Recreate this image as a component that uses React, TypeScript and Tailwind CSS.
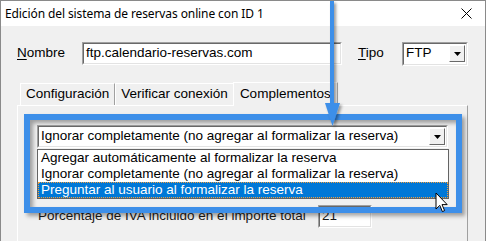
import { useState } from "react";

// Windows dialog: online booking system editor, "Complementos" tab with an open combobox.

const OPTIONS = [
  "Agregar automáticamente al formalizar la reserva",
  "Ignorar completamente (no agregar al formalizar la reserva)",
  "Preguntar al usuario al formalizar la reserva",
];

const TABS = ["Configuración", "Verificar conexión", "Complementos"];

const DropButton = () => (
  <div className="w-[16px] h-[17px] bg-[#f0f0f0] border border-t-white border-l-white border-r-[#696969] border-b-[#696969] flex items-center justify-center">
    <svg width="7" height="4" viewBox="0 0 7 4">
      <path d="M0 0H7L3.5 4Z" fill="#000" />
    </svg>
  </div>
);

const Sunken = ({ className, children }: { className: string; children: React.ReactNode }) => (
  <div
    className={`border border-t-[#a0a0a0] border-l-[#a0a0a0] border-r-white border-b-white ${className}`}
  >
    <div className="w-full h-full border border-t-[#696969] border-l-[#696969] border-r-[#e3e3e3] border-b-[#e3e3e3] bg-white flex items-center">
      {children}
    </div>
  </div>
);

export default function App() {
  const [active] = useState(2);
  const [selected] = useState(1);
  const [hover] = useState(2);

  return (
    <div
      className="relative w-[486px] h-[241px] overflow-hidden bg-[#f0f0f0] border-t border-l border-r border-[#8a8a8a] text-black"
      style={{ fontFamily: '"Liberation Sans", Arial, sans-serif' }}
    >
      {/* Title bar */}
      <div className="h-[25px] bg-white flex items-center justify-between pl-[4px] pr-[13px]">
        <span className="text-[12px] tracking-[-0.1px]" style={{ fontFamily: '"Noto Sans", sans-serif' }}>
          Edición del sistema de reservas online con ID 1
        </span>
        <svg width="11" height="11" viewBox="0 0 11 11">
          <path d="M0.5 0.5L10.5 10.5M10.5 0.5L0.5 10.5" stroke="#000" strokeWidth="1" />
        </svg>
      </div>

      {/* Nombre / Tipo */}
      <div className="flex items-center h-[23px] mt-[16px] text-[13.5px]">
        <span className="ml-[16px] w-[65px]">
          <span className="underline underline-offset-2">N</span>ombre
        </span>
        <Sunken className="w-[260px] h-[23px]">
          <span className="pl-[2px]">ftp.calendario-reservas.com</span>
        </Sunken>
        <span className="ml-[16px] w-[44px]">
          <span className="underline underline-offset-2">T</span>ipo
        </span>
        <Sunken className="w-[66px] h-[24px]">
          <span className="pl-[2px] flex-1">FTP</span>
          <div className="pr-[1px]">
            <DropButton />
          </div>
        </Sunken>
      </div>

      {/* Tabs */}
      <div className="flex items-end ml-[19px] mt-[17px] h-[23px] text-[13.5px]">
        {TABS.map((t, i) => (
          <div
            key={t}
            className={
              i === active
                ? "h-[24px] -mb-px px-[6px] bg-[#f0f0f0] border-t border-l border-r border-t-white border-l-white border-r-[#a0a0a0] flex items-center z-10 -ml-px"
                : "h-[22px] px-[5px] bg-[#f0f0f0] border-t border-l border-r border-t-white border-l-white border-r-[#a0a0a0] flex items-center"
            }
          >
            {t}
          </div>
        ))}
      </div>

      {/* Tab panel */}
      <div className="ml-[16px] w-[451px] h-[140px] border border-t-white border-l-white border-r-[#a0a0a0] border-b-[#a0a0a0] text-[13.5px]">
        <div className="pt-[19px] pl-[19px]">
          <Sunken className="w-[411px] h-[23px]">
            <span className="pl-[2px] flex-1">{OPTIONS[selected]}</span>
            <div className="pr-[1px]">
              <DropButton />
            </div>
          </Sunken>
        </div>
        <div className="flex items-center mt-[57px] pl-[20px] text-[#1a1a1a]">
          <span className="w-[280px]">Porcentaje de IVA incluido en el importe total</span>
          <Sunken className="w-[54px] h-[23px]">
            <span className="pl-[2px]">21</span>
          </Sunken>
        </div>
      </div>

      {/* Open dropdown list */}
      <div className="absolute left-[36px] top-[148px] w-[412px] bg-white border border-[#646464] text-[13.5px] z-20">
        {OPTIONS.map((o, i) => (
          <div
            key={o}
            className={
              i === hover
                ? "h-[16px] leading-[14px] pl-[2px] bg-[#0078d7] text-white border border-dotted border-[#f0a040]"
                : "h-[16px] leading-[16px] pl-[3px]"
            }
          >
            {o}
          </div>
        ))}
      </div>

      {/* Annotation frame */}
      <div
        className="absolute left-[23px] top-[113px] w-[438px] h-[99px] border-[6px] border-[#3d8fe9] z-30"
        style={{ boxShadow: "3px 3px 4px rgba(0,0,0,0.35), inset 3px 3px 4px rgba(0,0,0,0.35)" }}
      />

      {/* Annotation arrow */}
      <svg className="absolute left-[318px] top-0 z-40" width="30" height="130" viewBox="0 0 30 130">
        <defs>
          <filter id="sh" x="-50%" y="-10%" width="200%" height="130%">
            <feDropShadow dx="2" dy="2" stdDeviation="1.5" floodColor="#000" floodOpacity="0.4" />
          </filter>
        </defs>
        <g filter="url(#sh)" fill="#3d8fe9">
          <rect x="11" y="0" width="4" height="104" />
          <path d="M6 102H21L13.5 125Z" />
        </g>
      </svg>

      {/* Mouse cursor */}
      <svg className="absolute left-[434px] top-[191px] z-50" width="14" height="22" viewBox="0 0 14 22">
        <path
          d="M1 1V17L4.8 13.4L7.4 19.6L9.6 18.6L7 12.6H12.2Z"
          fill="#fff"
          stroke="#000"
          strokeWidth="1"
          strokeLinejoin="miter"
        />
      </svg>
    </div>
  );
}
